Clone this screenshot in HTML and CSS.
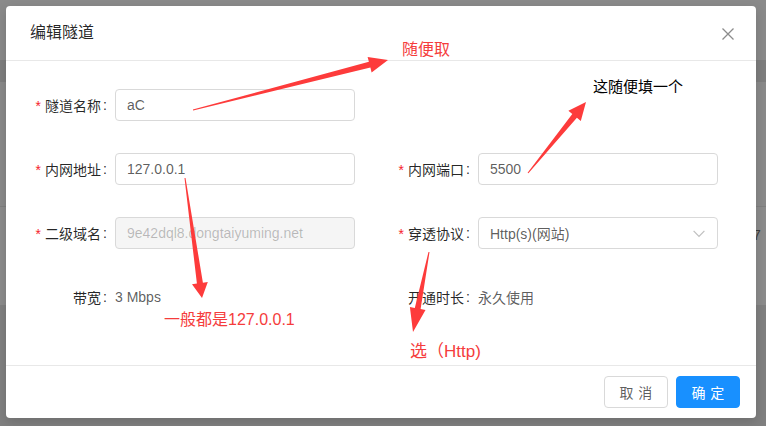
FILE: index.html
```html
<!DOCTYPE html>
<html lang="zh">
<head>
<meta charset="utf-8">
<title>编辑隧道</title>
<link rel="stylesheet" href="styles.css">
</head>
<body>
<div class="backdrop">
  <div class="bd-row bd-a"></div>
  <div class="bd-row bd-b"></div>
  <div class="bd-row bd-c"></div>
  <div class="bd-row bd-line"></div>
  <div class="bd-row bd-d"><span class="bd-text">7</span></div>
  <div class="bd-row bd-e"></div>
</div>

<div class="modal">
  <div class="modal-header">
    <div class="modal-title">编辑隧道</div>
    <svg class="close-icon" width="12" height="12" viewBox="0 0 12 12"><path d="M0.5 0.5 L11.5 11.5 M11.5 0.5 L0.5 11.5" stroke="#8c8c8c" stroke-width="1.3" fill="none"/></svg>
  </div>
  <div class="modal-body">
    <div class="form-grid">
      <div class="label required">隧道名称</div>
      <div class="field">aC</div>
      <div></div>
      <div></div>

      <div class="label required">内网地址</div>
      <div class="field">127.0.0.1</div>
      <div class="label required">内网端口</div>
      <div class="field">5500</div>

      <div class="label required">二级域名</div>
      <div class="field disabled">9e42dql8.dongtaiyuming.net</div>
      <div class="label required">穿透协议</div>
      <div class="field select">
        <span>Http(s)(网站)</span>
        <svg class="chevron" width="12" height="8" viewBox="0 0 12 8"><path d="M0.6 0.8 L6 6.4 L11.4 0.8" stroke="#bfbfbf" stroke-width="1.2" fill="none"/></svg>
      </div>

      <div class="label">带宽</div>
      <div class="value">3 Mbps</div>
      <div class="label">开通时长</div>
      <div class="value">永久使用</div>
    </div>
  </div>
  <div class="modal-footer">
    <button class="btn"><span>取消</span></button>
    <button class="btn btn-primary"><span>确定</span></button>
  </div>
</div>

<svg class="annot-arrows" width="766" height="426" viewBox="0 0 766 426">
  <polygon points="193.1,110.5 370.4,67.6 371.6,72.5 388,60 367.6,57.0 368.9,61.8 192.9,109.5"/>
  <polygon points="528.4,173.3 576.9,117.8 580.8,121.0 586,102 568.4,110.8 572.3,114.0 527.6,172.7"/>
  <polygon points="184.5,178.1 196.9,283.5 192.0,284.2 202,298 207.8,282.0 202.9,282.7 185.5,177.9"/>
  <polygon points="428.5,251.9 414.8,307.9 409.9,306.9 413,332 425.5,310.1 420.6,309.1 429.5,252.1"/>
</svg>
<div class="note note-red note-1">随便取</div>
<div class="note note-black note-2">这随便填一个</div>
<div class="note note-red note-3">一般都是127.0.0.1</div>
<div class="note note-red note-4">选（Http)</div>
</body>
</html>
```

FILE: styles.css
```css
* { box-sizing: border-box; }
html, body {
  margin: 0;
  padding: 0;
  width: 766px;
  height: 426px;
  overflow: hidden;
}
body {
  position: relative;
  font-family: "Liberation Sans", "Noto Sans CJK SC", sans-serif;
  font-size: 14px;
  background: #808080;
}

/* dimmed page behind the modal */
.backdrop { display: flex; flex-direction: column; }
.bd-row { width: 100%; }
.bd-a { height: 60px; background: #8a8a8a; }
.bd-b { height: 22px; background: #7e7e7e; }
.bd-c { height: 124px; background: #8a8a8a; }
.bd-line { height: 1px; background: #7f7f7f; }
.bd-d { height: 98px; background: #8c8c8c; padding: 18px 0 0 753px; }
.bd-e { height: 121px; background: #808080; }
.bd-text { color: #3c3c3c; font-size: 14px; line-height: 20px; }

/* modal */
.modal {
  position: absolute;
  left: 6px;
  top: 6px;
  width: 750px;
  background: #fff;
  border-radius: 4px;
  box-shadow: 0 4px 12px rgba(0, 0, 0, 0.15);
  display: flex;
  flex-direction: column;
}
.modal-header {
  height: 55px;
  border-bottom: 1px solid #e8e8e8;
  display: flex;
  align-items: center;
  justify-content: space-between;
  padding: 0 22px 0 24px;
}
.modal-title {
  font-size: 16px;
  line-height: 22px;
  color: rgba(0, 0, 0, 0.85);
  font-weight: 400;
}
.close-icon { display: block; margin-top: 1px; }

.modal-body {
  height: 304px;
  padding: 28px 0 0 24px;
}
.form-grid {
  display: grid;
  grid-template-columns: 85px 240px 123px 240px;
  grid-auto-rows: 32px;
  row-gap: 32px;
}
.label {
  display: flex;
  align-items: center;
  justify-content: flex-end;
  color: rgba(0, 0, 0, 0.85);
  white-space: nowrap;
}
.label::after {
  content: ":";
  margin: 0 8px 0 2px;
}
.required::before {
  content: "*";
  display: inline-block;
  width: 7px;
  height: 14px;
  margin: 6px 4px 0 0;
  color: #f5222d;
  font-family: "Liberation Mono", monospace;
  font-size: 14px;
  line-height: 14px;
}
.field {
  height: 32px;
  border: 1px solid #d9d9d9;
  border-radius: 4px;
  padding: 0 11px;
  display: flex;
  align-items: center;
  color: rgba(0, 0, 0, 0.65);
  background: #fff;
  white-space: nowrap;
}
.field.disabled {
  background: #f5f5f5;
  color: rgba(0, 0, 0, 0.25);
}
.field.select { justify-content: space-between; padding-right: 12px; }
.chevron { display: block; margin-top: 1px; }
.value {
  display: flex;
  align-items: center;
  color: rgba(0, 0, 0, 0.65);
}

.modal-footer {
  border-top: 1px solid #e8e8e8;
  padding: 10px 16px;
  display: flex;
  justify-content: flex-end;
  gap: 8px;
}
.btn {
  width: 64px;
  height: 32px;
  border: 1px solid #d9d9d9;
  border-radius: 4px;
  background: #fff;
  color: rgba(0, 0, 0, 0.65);
  font-family: inherit;
  font-size: 14px;
  padding: 0;
  display: flex;
  align-items: center;
  justify-content: center;
}
.btn span {
  letter-spacing: 0.34em;
  margin-right: -0.34em;
}
.btn-primary {
  background: #1890ff;
  border-color: #1890ff;
  color: #fff;
}

/* annotations drawn on top */
.annot-arrows {
  position: absolute;
  left: 0;
  top: 0;
  pointer-events: none;
}
.annot-arrows polygon { fill: #fd3b3b; }
.note {
  position: absolute;
  white-space: nowrap;
  font-size: 16px;
  line-height: 16px;
}
.note-red { color: #f53c3c; }
.note-black { color: #000; font-size: 15px; line-height: 15px; }
.note-1 { left: 402px; top: 42px; }
.note-2 { left: 593px; top: 79px; }
.note-3 { left: 164px; top: 312px; }
.note-4 { left: 410px; top: 343px; font-size: 17px; line-height: 17px; }
```
